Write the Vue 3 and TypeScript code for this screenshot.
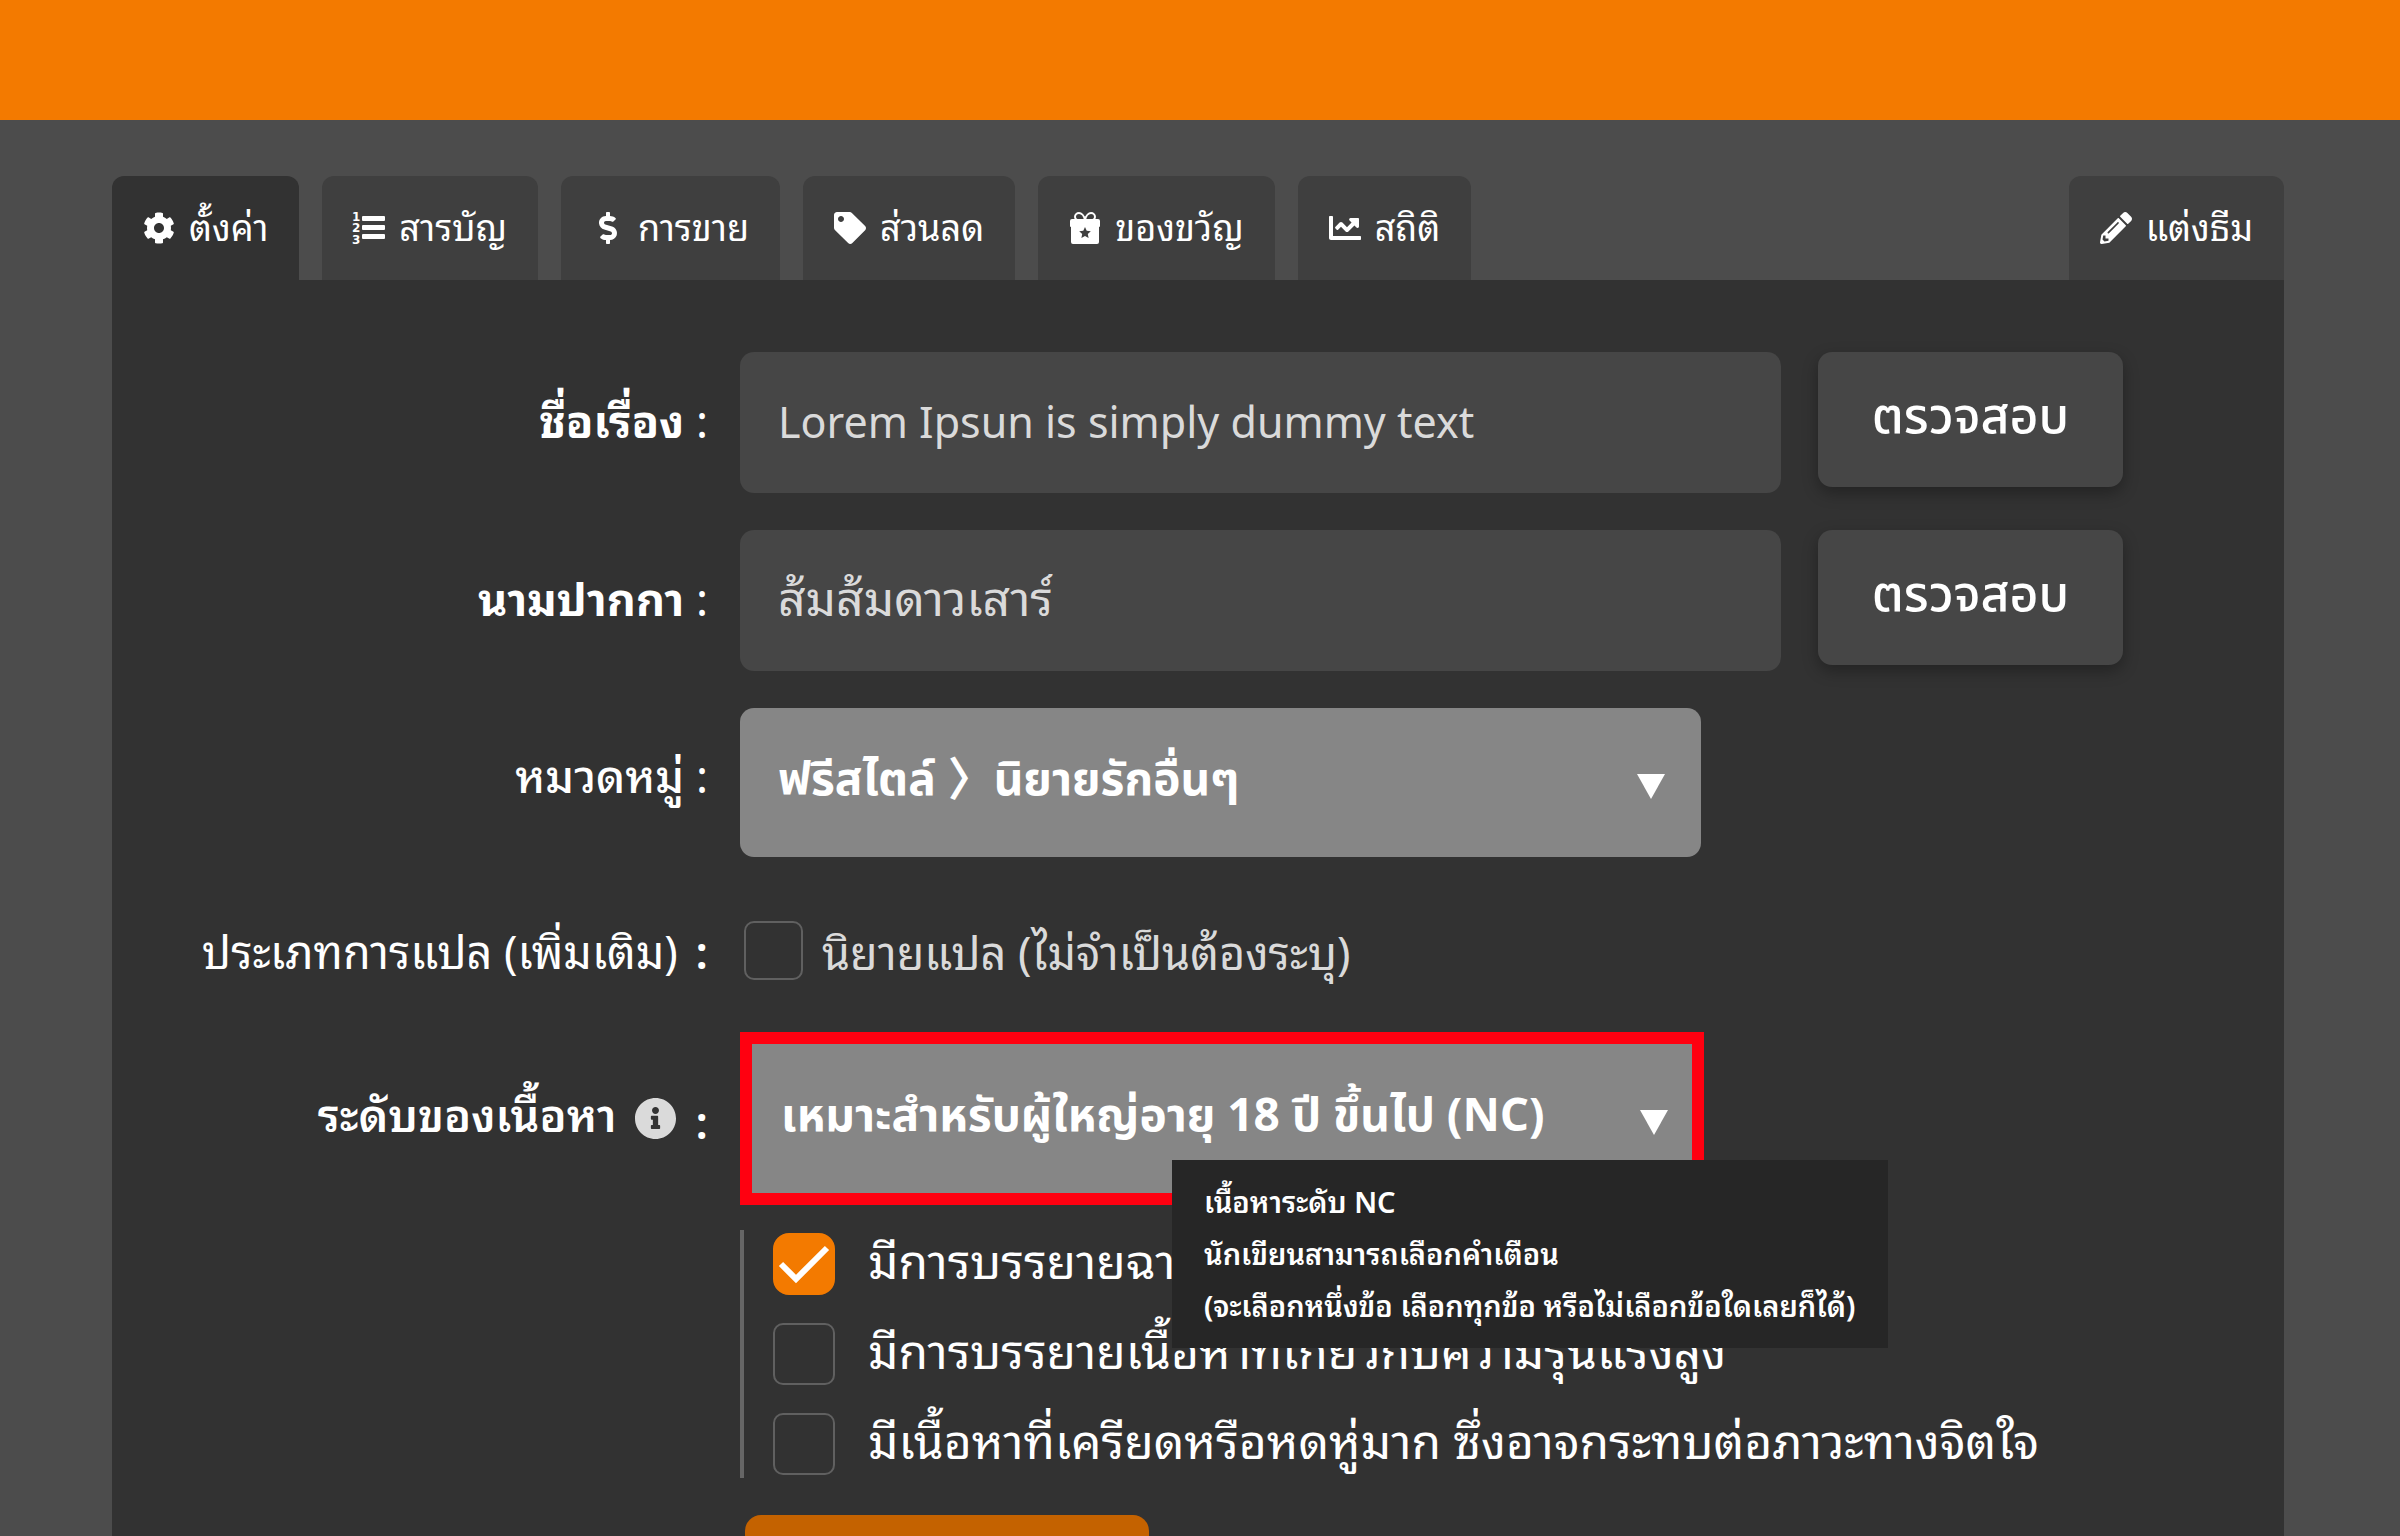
<script setup lang="ts">
import { ref } from 'vue'

interface Tab {
  id: string
  label: string
}

interface Warning {
  id: string
  label: string
  checked: boolean
}

const tabs: Tab[] = [
  { id: 'settings', label: 'ตั้งค่า' },
  { id: 'contents', label: 'สารบัญ' },
  { id: 'sales', label: 'การขาย' },
  { id: 'discount', label: 'ส่วนลด' },
  { id: 'gift', label: 'ของขวัญ' },
  { id: 'stats', label: 'สถิติ' },
]

const activeTab = ref('settings')
const title = ref('Lorem Ipsun is simply dummy text')
const penName = ref('ส้มส้มดาวเสาร์')
const category = ref('romance')
const rating = ref('nc')
const translated = ref(false)
const warnings = ref<Warning[]>([
  { id: 'scene', label: 'มีการบรรยายฉาก', checked: true },
  { id: 'violence', label: 'มีการบรรยายเนื้อหาที่เกี่ยวกับความรุนแรงสูง', checked: false },
  { id: 'stress', label: 'มีเนื้อหาที่เครียดหรือหดหู่มาก ซึ่งอาจกระทบต่อภาวะทางจิตใจ', checked: false },
])
</script>

<template>
  <div class="page">
    <header class="topbar"></header>
    <div class="shell">
      <nav class="tabs">
        <button
          v-for="tab in tabs"
          :key="tab.id"
          type="button"
          class="tab"
          :class="[tab.id, { active: tab.id === activeTab }]"
          @click="activeTab = tab.id"
        >
          <svg v-if="tab.id === 'settings'" class="icon" viewBox="0 0 512 512" aria-hidden="true">
            <path d="M487.4 315.7l-42.6-24.6c4.3-23.2 4.3-47 0-70.2l42.6-24.6c4.9-2.8 7.1-8.6 5.5-14-11.1-35.6-30-67.8-54.7-94.6-3.8-4.1-10-5.1-14.8-2.3L380.8 110c-17.9-15.4-38.5-27.3-60.8-35.1V25.8c0-5.6-3.9-10.5-9.4-11.7-36.7-8.2-74.3-7.8-109.2 0-5.5 1.2-9.4 6.1-9.4 11.7V75c-22.2 7.9-42.8 19.8-60.8 35.1L88.7 85.5c-4.9-2.8-11-1.9-14.8 2.3-24.7 26.7-43.6 58.9-54.7 94.6-1.7 5.4.6 11.2 5.5 14L67.3 221c-4.3 23.2-4.3 47 0 70.2l-42.6 24.6c-4.9 2.8-7.1 8.6-5.5 14 11.1 35.6 30 67.8 54.7 94.6 3.8 4.1 10 5.1 14.8 2.3l42.6-24.6c17.9 15.4 38.5 27.3 60.8 35.1v49.2c0 5.6 3.9 10.5 9.4 11.7 36.7 8.2 74.3 7.8 109.2 0 5.5-1.2 9.4-6.1 9.4-11.7v-49.2c22.2-7.9 42.8-19.8 60.8-35.1l42.6 24.6c4.9 2.8 11 1.9 14.8-2.3 24.7-26.7 43.6-58.9 54.7-94.6 1.5-5.5-.7-11.3-5.6-14.1zM256 336c-44.1 0-80-35.9-80-80s35.9-80 80-80 80 35.9 80 80-35.9 80-80 80z" />
          </svg>
          <svg v-else-if="tab.id === 'contents'" class="icon" viewBox="0 0 32 32" aria-hidden="true">
            <g class="digits">
              <text x="-1" y="9">1</text>
              <text x="-1" y="20">2</text>
              <text x="-1" y="32">3</text>
            </g>
            <rect x="9" y="4" width="23" height="5" rx="1" />
            <rect x="9" y="13" width="23" height="5" rx="1" />
            <rect x="9" y="22" width="23" height="5" rx="1" />
          </svg>
          <svg v-else-if="tab.id === 'sales'" class="icon" viewBox="-112 0 512 512" aria-hidden="true">
            <path d="M209.2 233.4l-108-31.6C88.7 198.2 80 186.5 80 173.5c0-16.3 13.2-29.5 29.5-29.5h66.3c12.2 0 24.2 3.7 34.2 10.5 6.1 4.1 14.3 3.1 19.5-2l34.8-34c7.1-6.9 6.1-18.4-1.8-24.5C238 74.8 207.4 64.1 176 64V16c0-8.8-7.2-16-16-16h-32c-8.8 0-16 7.2-16 16v48h-2.5C45.8 64-5.4 118.7.5 183.6c4.2 46.1 39.4 83.6 83.8 96.6l102.5 30c12.5 3.7 21.2 15.3 21.2 28.3 0 16.3-13.2 29.5-29.5 29.5h-66.3C100 368 88 364.3 78 357.5c-6.1-4.1-14.3-3.1-19.5 2l-34.8 34c-7.1 6.9-6.1 18.4 1.8 24.5 24.5 19.2 55.1 29.9 86.5 30v48c0 8.8 7.2 16 16 16h32c8.8 0 16-7.2 16-16v-48.2c46.6-.9 90.3-28.6 105.7-72.7 21.5-61.6-14.6-124.8-72.5-141.7z" />
          </svg>
          <svg v-else-if="tab.id === 'discount'" class="icon" viewBox="0 0 512 512" aria-hidden="true">
            <path d="M0 252.118V48C0 21.49 21.49 0 48 0h204.118a48 48 0 0 1 33.941 14.059l211.883 211.883c18.745 18.745 18.745 49.137 0 67.882L293.823 497.941c-18.745 18.745-49.137 18.745-67.882 0L14.059 286.059A48 48 0 0 1 0 252.118zM112 64c-26.51 0-48 21.49-48 48s21.49 48 48 48 48-21.49 48-48-21.49-48-48-48z" />
          </svg>
          <svg v-else-if="tab.id === 'gift'" class="icon" viewBox="0 0 32 32" aria-hidden="true">
            <path d="M16 8C15 3 12 1 10 1a4 4 0 0 0-4 4q0 2 2 3M16 8C17 3 20 1 22 1a4 4 0 0 1 4 4q0 2-2 3" fill="none" stroke="currentColor" stroke-width="2" />
            <path d="M3 7h26a2 2 0 0 1 2 2v5a1 1 0 0 1-1 1H2a1 1 0 0 1-1-1V9a2 2 0 0 1 2-2z" />
            <path fill-rule="evenodd" d="M2 14h28v16a2 2 0 0 1-2 2H4a2 2 0 0 1-2-2zM16 15l-1.700 3.700-4.100.5 3 2.800-.8 4 3.600-2 3.600 2-.8-4 3-2.800-4.100-.5z" />
          </svg>
          <svg v-else class="icon" viewBox="0 0 512 512" aria-hidden="true">
            <path d="M496 384H64V80c0-8.84-7.16-16-16-16H16C7.16 64 0 71.16 0 80v336c0 17.67 14.33 32 32 32h464c8.84 0 16-7.16 16-16v-32c0-8.84-7.16-16-16-16zM464 96H345.94c-21.38 0-32.09 25.85-16.97 40.97l32.4 32.4L288 242.75l-73.37-73.37c-12.5-12.5-32.76-12.5-45.25 0l-68.69 68.69c-6.25 6.25-6.25 16.38 0 22.63l22.62 22.62c6.25 6.25 16.38 6.25 22.63 0L192 237.250l73.370 73.370c12.5 12.5 32.760 12.5 45.250 0l96-96 32.400 32.400c15.120 15.120 40.970 4.410 40.970-16.970V112c.010-8.840-7.150-16-15.990-16z" />
          </svg>
          <span>{{ tab.label }}</span>
        </button>
        <button type="button" class="tab theme">
          <svg class="icon" viewBox="0 0 512 512" aria-hidden="true">
            <path d="M497.9 142.1l-46.1 46.1c-4.7 4.7-12.3 4.7-17 0l-111-111c-4.7-4.7-4.7-12.3 0-17l46.1-46.1c18.7-18.7 49.1-18.7 67.9 0l60.1 60.1c18.8 18.7 18.8 49.1 0 67.9zM284.2 99.8L21.6 362.4.4 483.9c-2.9 16.4 11.4 30.6 27.8 27.8l121.5-21.3 262.6-262.6c4.7-4.7 4.7-12.3 0-17l-111-111c-4.8-4.7-12.4-4.7-17.1 0zM124.1 339.9c-5.5-5.5-5.5-14.3 0-19.8l154-154c5.5-5.5 14.3-5.5 19.8 0s5.5 14.3 0 19.8l-154 154c-5.5 5.5-14.3 5.5-19.8 0zM88 424h48v36.3l-64.5 11.3-31.1-31.1L51.7 376H88v48z" />
          </svg>
          <span>แต่งธีม</span>
        </button>
      </nav>

      <form class="panel" @submit.prevent>
        <div class="row">
          <label class="label bold" for="title">ชื่อเรื่อง <span class="thin">:</span></label>
          <div class="field">
            <input id="title" v-model="title" class="textbox latin" type="text" />
            <button type="button" class="check-btn">ตรวจสอบ</button>
          </div>
        </div>

        <div class="row">
          <label class="label bold" for="pen">นามปากกา <span class="thin">:</span></label>
          <div class="field">
            <input id="pen" v-model="penName" class="textbox" type="text" />
            <button type="button" class="check-btn">ตรวจสอบ</button>
          </div>
        </div>

        <div class="row category">
          <label class="label medium" for="category">หมวดหมู่ <span class="thin">:</span></label>
          <div class="select-wrap">
            <select id="category" v-model="category" class="select">
              <option value="romance">ฟรีสไตล์ 〉นิยายรักอื่นๆ</option>
            </select>
            <svg class="caret" viewBox="0 0 28 25" aria-hidden="true"><path d="M0 0h28L14 25z" /></svg>
          </div>
        </div>

        <div class="row translation">
          <span class="label">ประเภทการแปล (เพิ่มเติม) <span class="colon">:</span></span>
          <label class="option muted">
            <input v-model="translated" type="checkbox" class="box small" />
            <span>นิยายแปล (ไม่จำเป็นต้องระบุ)</span>
          </label>
        </div>

        <div class="row rating">
          <div class="label strong">
            <label for="rating">ระดับของเนื้อหา</label>
            <svg class="info" viewBox="8 8 496 496" aria-hidden="true">
              <path d="M256 8C119.043 8 8 119.083 8 256c0 136.997 111.043 248 248 248s248-111.003 248-248C504 119.083 392.957 8 256 8zm0 110c23.196 0 42 18.804 42 42s-18.804 42-42 42-42-18.804-42-42 18.804-42 42-42zm56 254c0 6.627-5.373 12-12 12h-88c-6.627 0-12-5.373-12-12v-24c0-6.627 5.373-12 12-12h12v-64h-12c-6.627 0-12-5.373-12-12v-24c0-6.627 5.373-12 12-12h64c6.627 0 12 5.373 12 12v100h12c6.627 0 12 5.373 12 12v24z" />
            </svg>
            <span class="colon">:</span>
          </div>
          <div class="select-wrap highlight">
            <select id="rating" v-model="rating" class="select">
              <option value="nc">เหมาะสำหรับผู้ใหญ่อายุ 18 ปี ขึ้นไป (NC)</option>
            </select>
            <svg class="caret" viewBox="0 0 28 25" aria-hidden="true"><path d="M0 0h28L14 25z" /></svg>
            <div class="tooltip" role="tooltip">
              <p>เนื้อหาระดับ NC</p>
              <p>นักเขียนสามารถเลือกคำเตือน</p>
              <p>(จะเลือกหนึ่งข้อ เลือกทุกข้อ หรือไม่เลือกข้อใดเลยก็ได้)</p>
            </div>
          </div>
        </div>

        <div class="row warnings-row">
          <div class="warnings">
            <label v-for="item in warnings" :key="item.id" class="option">
              <span class="tick">
                <input v-model="item.checked" type="checkbox" class="box" />
                <svg v-if="item.checked" class="mark" viewBox="0 0 62 62" aria-hidden="true">
                  <path d="M8 31l15 15 31-31" />
                </svg>
              </span>
              <span class="warning-text">{{ item.label }}</span>
            </label>
          </div>
        </div>

        <div class="row submit-row">
          <button type="submit" class="save" aria-label="บันทึก"></button>
        </div>
      </form>
    </div>
  </div>
</template>

<style>
body {
  margin: 0;
  background: #4c4c4c;
}
</style>

<style scoped>
.page {
  height: 100vh;
  overflow: hidden;
  background: #4c4c4c;
  color: #fff;
  font-family: "Noto Sans Thai Looped", "Noto Sans", sans-serif;
  font-size: 45px;
}

* {
  box-sizing: border-box;
}

button,
input,
select {
  margin: 0;
  border: 0;
  color: inherit;
  font-family: inherit;
}

.topbar {
  height: 120px;
  background: #f37a00;
}

.shell {
  padding: 56px 116px 0 112px;
}

.tabs {
  display: flex;
  gap: 23px;
}

.tab {
  display: flex;
  align-items: center;
  gap: 14px;
  height: 104px;
  padding: 0 31px;
  border-radius: 12px 12px 0 0;
  background: #3f3f3f;
  font-size: 36px;
  font-weight: 400;
  line-height: 44px;
}

.tab span {
  padding-bottom: 6px;
}

.tab.active {
  background: #323232;
}

.tab.theme {
  margin-left: auto;
}

.icon {
  flex: none;
  width: 32px;
  height: 32px;
  overflow: visible;
  fill: currentColor;
}

.digits {
  font: 700 12px "DejaVu Sans", sans-serif;
}

.panel {
  display: flex;
  flex-direction: column;
  padding: 72px 161px 60px 0;
  background: #323232;
}

.row {
  display: grid;
  grid-template-columns: 596px minmax(0, 1fr);
  column-gap: 32px;
  align-items: center;
  margin-bottom: 37px;
}

.label {
  padding-bottom: 10px;
  text-align: right;
  line-height: 60px;
}

.bold {
  font-weight: 700;
}

.strong {
  font-weight: 600;
}

.medium {
  font-weight: 500;
}

.thin {
  font-weight: 400;
}

.field {
  display: flex;
  align-items: flex-start;
  gap: 37px;
}

.textbox {
  flex: 1;
  min-width: 0;
  height: 141px;
  padding: 0 38px 12px;
  border-radius: 14px;
  background: #464646;
  color: #dadada;
  font-size: 48px;
}

.latin {
  padding-bottom: 3px;
  font-family: "Noto Sans", "Noto Sans Thai Looped", sans-serif;
  font-size: 43px;
}

.check-btn {
  width: 305px;
  height: 135px;
  padding: 0 0 4px;
  border-radius: 14px;
  background: #464646;
  box-shadow: 0 6px 16px rgba(0, 0, 0, 0.3);
  font-family: "Noto Sans Thai", "Noto Sans", sans-serif;
  font-size: 50px;
  font-weight: 500;
}

.category .label {
  padding-bottom: 20px;
}

.select-wrap {
  position: relative;
  width: 961px;
}

.select {
  display: block;
  width: 100%;
  height: 149px;
  padding: 0 100px 4px 38px;
  border-radius: 14px;
  appearance: none;
  background: #868686;
  font-family: "Noto Sans Thai", "Noto Sans", "Noto Sans CJK JP", sans-serif;
  font-size: 46px;
  font-weight: 700;
}

.caret {
  position: absolute;
  top: 66px;
  right: 36px;
  width: 28px;
  height: 25px;
  fill: #fff;
  pointer-events: none;
}

.highlight {
  width: 964px;
  border: 12px solid #ff0010;
}

.highlight .select {
  padding-left: 29px;
  border-radius: 0;
}

.highlight .caret {
  right: 24px;
}

.option {
  display: flex;
  align-items: center;
  line-height: 62px;
}

.box {
  display: block;
  flex: none;
  width: 62px;
  height: 62px;
  border: 2px solid #606060;
  border-radius: 10px;
  appearance: none;
}

.box:checked {
  border-color: #f37a00;
  border-radius: 16px;
  background: #f37a00;
}

.small {
  width: 59px;
  height: 59px;
}

.muted {
  gap: 19px;
  padding-left: 4px;
  color: #dadada;
}

.translation {
  margin: 25px 0 51px;
}

.translation .label {
  padding-bottom: 2px;
}

.colon {
  margin-left: 6px;
  font-weight: 600;
}

.rating {
  margin-bottom: 25px;
}

.rating .label {
  display: flex;
  align-items: center;
  justify-content: flex-end;
  padding-bottom: 0;
}

.rating .label label {
  padding-bottom: 14px;
}

.info {
  width: 41px;
  height: 41px;
  margin: 0 14px 0 18px;
  fill: #dadada;
}

.tooltip {
  position: absolute;
  z-index: 1;
  top: 116px;
  left: 420px;
  width: 716px;
  padding: 14px 32px 18px;
  background: #262626;
  font-size: 29px;
  font-weight: 600;
  line-height: 52px;
  white-space: nowrap;
}

.tooltip p {
  margin: 0;
}

.warnings {
  display: flex;
  grid-column: 2;
  flex-direction: column;
  gap: 28px;
  padding: 3px 0 3px 29px;
  border-left: 4px solid #666;
  font-size: 48px;
  white-space: nowrap;
}

.warnings .option {
  height: 62px;
}

.warning-text {
  padding-bottom: 12px;
}

.tick {
  position: relative;
  margin-right: 33px;
}

.mark {
  position: absolute;
  inset: 0;
  fill: none;
  stroke: #fff;
  stroke-width: 6;
  pointer-events: none;
}

.save {
  grid-column: 2;
  width: 404px;
  height: 135px;
  margin-left: 5px;
  border-radius: 16px;
  background: #c46200;
}
</style>
